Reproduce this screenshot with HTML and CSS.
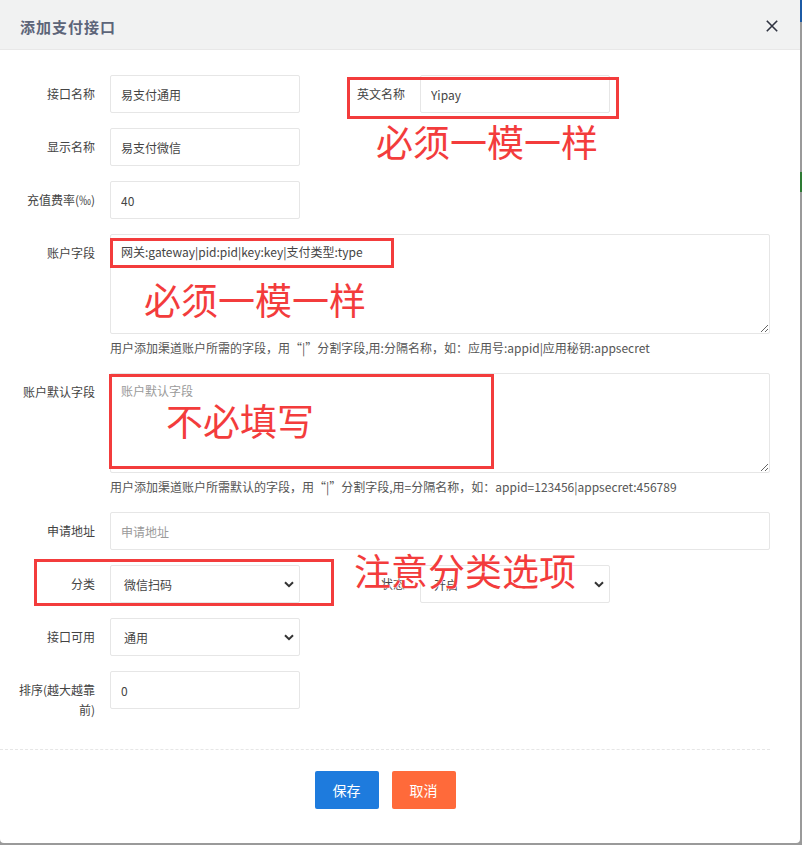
FILE: index.html
```
<!DOCTYPE html>
<html lang="zh-CN">
<head>
<meta charset="utf-8">
<title>添加支付接口</title>
<link rel="stylesheet" href="styles.css">
</head>
<body>
<div class="modal">
  <div class="modal-head">
    <span class="modal-title">添加支付接口</span>
    <span class="modal-close">
      <svg width="12" height="12" viewBox="0 0 12 12"><path d="M0.8 0.8 L11.2 11.2 M11.2 0.8 L0.8 11.2" stroke="#2f3340" stroke-width="1.6" fill="none"/></svg>
    </span>
  </div>

  <form class="form">
    <div class="item">
      <div class="inline">
        <label class="label">接口名称</label>
        <div class="control-inline"><input class="input" value="易支付通用"></div>
      </div>
      <div class="inline">
        <label class="label">英文名称</label>
        <div class="control-inline"><input class="input" value="Yipay"></div>
      </div>
    </div>

    <div class="item">
      <label class="label">显示名称</label>
      <div class="control-inline"><input class="input" value="易支付微信"></div>
    </div>

    <div class="item">
      <label class="label">充值费率(‰)</label>
      <div class="control-inline"><input class="input" value="40"></div>
    </div>

    <div class="item item-text">
      <label class="label">账户字段</label>
      <div class="control-block">
        <textarea class="textarea">网关:gateway|pid:pid|key:key|支付类型:type</textarea>
        <div class="help">用户添加渠道账户所需的字段，用“|”分割字段,用:分隔名称，如：应用号:appid|应用秘钥:appsecret</div>
      </div>
    </div>

    <div class="item item-text">
      <label class="label">账户默认字段</label>
      <div class="control-block">
        <textarea class="textarea" placeholder="账户默认字段"></textarea>
        <div class="help">用户添加渠道账户所需默认的字段，用“|”分割字段,用=分隔名称，如：appid=123456|appsecret:456789</div>
      </div>
    </div>

    <div class="item">
      <label class="label">申请地址</label>
      <div class="control-block"><input class="input" placeholder="申请地址"></div>
    </div>

    <div class="item">
      <div class="inline">
        <label class="label">分类</label>
        <div class="control-inline">
          <div class="select"><span>微信扫码</span><svg class="chev" width="10" height="7" viewBox="0 0 10 7"><path d="M1 1.2 L5 5.2 L9 1.2" stroke="#333" stroke-width="2" fill="none"/></svg></div>
        </div>
      </div>
      <div class="inline">
        <label class="label">状态</label>
        <div class="control-inline">
          <div class="select"><span>开启</span><svg class="chev" width="10" height="7" viewBox="0 0 10 7"><path d="M1 1.2 L5 5.2 L9 1.2" stroke="#333" stroke-width="2" fill="none"/></svg></div>
        </div>
      </div>
    </div>

    <div class="item">
      <label class="label">接口可用</label>
      <div class="control-inline">
        <div class="select"><span>通用</span><svg class="chev" width="10" height="7" viewBox="0 0 10 7"><path d="M1 1.2 L5 5.2 L9 1.2" stroke="#333" stroke-width="2" fill="none"/></svg></div>
      </div>
    </div>

    <div class="item">
      <label class="label">排序(越大越靠前)</label>
      <div class="control-inline"><input class="input" value="0"></div>
    </div>
  </form>

  <div class="foot">
    <button class="btn btn-save" type="button">保存</button>
    <button class="btn btn-cancel" type="button">取消</button>
  </div>

  <div class="mark box1"></div>
  <div class="note note1">必须一模一样</div>
  <div class="mark box2"></div>
  <div class="note note2">必须一模一样</div>
  <div class="mark box3"></div>
  <div class="note note3">不必填写</div>
  <div class="mark box4"></div>
  <div class="note note4">注意分类选项</div>
</div>
</body>
</html>
```

FILE: styles.css
```
* { box-sizing: border-box; }

html, body {
  margin: 0;
  padding: 0;
}

body {
  width: 802px;
  height: 845px;
  overflow: hidden;
  font-family: "Noto Sans CJK SC", "Noto Sans", sans-serif;
  font-size: 12px;
  color: #444;
  background: linear-gradient(to bottom, #1c5aa4 0, #1c5aa4 22px, #9a9a9a 22px, #9a9a9a 172px, #2e7a34 172px, #2e7a34 192px, #9a9a9a 192px);
}

.modal {
  position: relative;
  width: 800px;
  height: 843px;
  background: #fff;
  border-radius: 0 0 4px 4px;
}

.modal-head {
  height: 50px;
  background: #f1f2f2;
  border-bottom: 1px solid #e8e8e8;
  display: flex;
  align-items: center;
  justify-content: space-between;
  padding: 3px 22px 0 20px;
}

.modal-title {
  font-size: 15px;
  letter-spacing: 1px;
  font-weight: bold;
  color: #5d6579;
}

.modal-close {
  display: flex;
  width: 12px;
  height: 12px;
}

.form {
  padding: 25px 30px 0 0;
}

.item {
  display: flex;
  align-items: flex-start;
  margin-bottom: 15px;
}

.inline {
  display: flex;
  align-items: flex-start;
}

.label {
  flex: none;
  width: 110px;
  padding: 9px 15px;
  line-height: 20px;
  text-align: right;
  color: #444;
}

.control-inline {
  flex: none;
  width: 190px;
  margin-right: 10px;
}

.control-block {
  flex: 1;
  min-width: 0;
}

.input {
  display: block;
  width: 100%;
  height: 38px;
  border: 1px solid #e6e6e6;
  border-radius: 2px;
  padding: 0 10px;
  font-family: inherit;
  font-size: 12px;
  color: #444;
  background: #fff;
  outline: none;
}

.input::placeholder,
.textarea::placeholder {
  color: #9a9a9a;
}

.textarea {
  display: block;
  width: 100%;
  height: 100px;
  border: 1px solid #e6e6e6;
  border-radius: 2px;
  padding: 7px 10px;
  line-height: 20px;
  font-family: inherit;
  font-size: 12px;
  color: #444;
  resize: vertical;
  outline: none;
}

.help {
  padding-top: 4px;
  line-height: 20px;
  height: 24px;
  color: #555;
  white-space: nowrap;
}

.select {
  display: flex;
  align-items: center;
  justify-content: space-between;
  height: 38px;
  border: 1px solid #e6e6e6;
  border-radius: 2px;
  padding: 0 5px 0 13px;
  color: #444;
  background: #fff;
}

.chev {
  display: block;
}

.foot {
  margin: 20px 30px 0 0;
  border-top: 1px dashed #e6e6e6;
  padding-top: 21px;
  display: flex;
  justify-content: center;
  gap: 13px;
}

.btn {
  height: 38px;
  padding: 0 18px;
  border: none;
  border-radius: 2px;
  font-family: inherit;
  font-size: 14px;
  color: #fff;
  line-height: 38px;
}

.btn-save { background: #1e7bdd; }
.btn-cancel { background: #ff6a3a; }

.mark {
  position: absolute;
  border: 3px solid #f33c3c;
}

.box1 { left: 347px; top: 77px; width: 272px; height: 42px; }
.box2 { left: 110px; top: 238px; width: 284px; height: 30px; }
.box3 { left: 109px; top: 374px; width: 385px; height: 95px; }
.box4 { left: 34px; top: 559px; width: 300px; height: 47px; }

.note {
  position: absolute;
  font-size: 37px;
  line-height: 1;
  color: #f33c3c;
  white-space: nowrap;
  text-shadow: 0 0 1px #fff, 0 0 2px #fff;
}

.note1 { left: 376px; top: 123px; }
.note2 { left: 144px; top: 281px; }
.note3 { left: 166px; top: 402px; }
.note4 { left: 354px; top: 552px; }
```
